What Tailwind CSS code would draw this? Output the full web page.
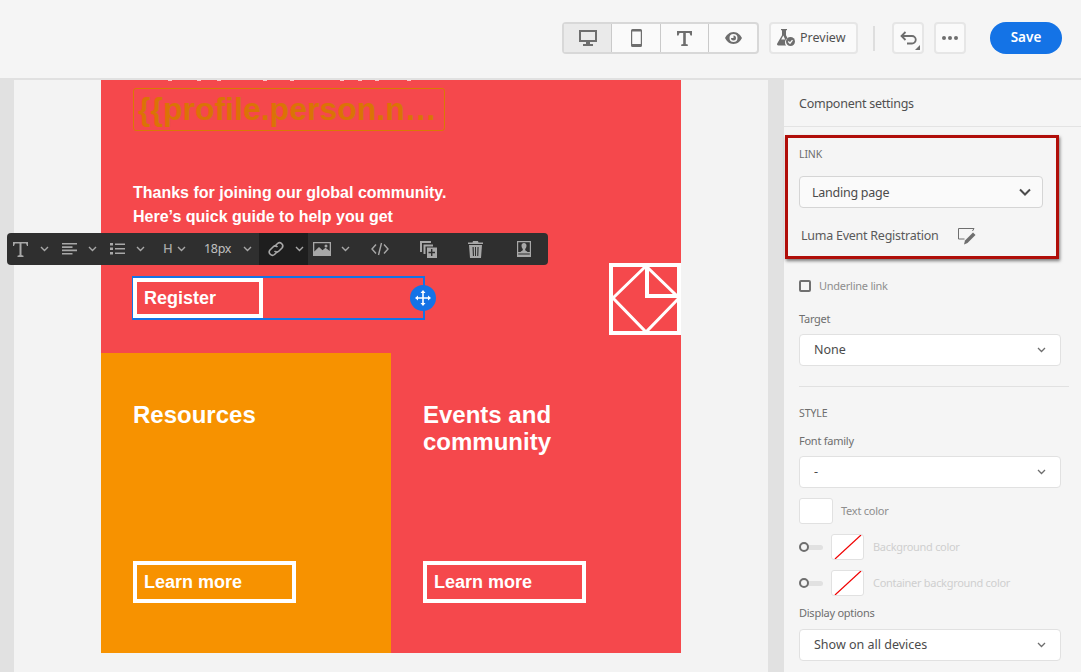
<!DOCTYPE html>
<html lang="en">
<head>
    <meta charset="UTF-8">
    <title>Email Designer</title>
    <script src="https://cdn.jsdelivr.net/npm/@tailwindcss/browser@4"></script>
</head>
<body class="w-[1081px] h-[672px] overflow-hidden relative bg-[#f5f5f5] font-['Noto_Sans',sans-serif]">

    <!-- top bar -->
    <header class="h-[80px] bg-[#f5f5f5] border-b-2 border-[#e1e1e1] flex items-center pl-[562px] pb-[2px]">
        <div class="flex h-[32px] w-[197px] rounded border-2 border-[#d8d8d8] bg-[#fafafa]">
            <div class="w-[48px] bg-[#eaeaea] border-r border-[#cacaca] flex items-center justify-center">
                <svg class="w-[18px] h-[18px]" viewBox="0 0 18 18" fill="#6e6e6e"><path d="M0 1h18v12H11v2h3v2H4v-2h3v-2H0zM2 3v8h14V3z"/></svg>
            </div>
            <div class="w-[49px] border-r border-[#cacaca] flex items-center justify-center">
                <svg class="w-[11px] h-[18px]" viewBox="0 0 11 18" fill="#6e6e6e"><path d="M1.5 0h8A1.5 1.5 0 0 1 11 1.500v15A1.500 1.500 0 0 1 9.500 18h-8A1.500 1.500 0 0 1 0 16.500v-15A1.500 1.500 0 0 1 1.500 0zM1.200 2.500v12.500h8.600V2.500z"/></svg>
            </div>
            <div class="w-[48px] border-r border-[#cacaca] flex items-center justify-center">
                <svg class="w-[15px] h-[15px]" viewBox="0 0 15 15" fill="#6e6e6e"><path d="M0 0h15v4.500h-1.500L12.500 2H8.800v11l2 .5V15H4.200v-1.500l2-.5V2H2.500l-1 2.500H0z"/></svg>
            </div>
            <div class="flex-1 flex items-center justify-center">
                <svg class="w-[17px] h-[12px]" viewBox="0 0 17 12" fill="#6e6e6e"><path fill-rule="evenodd" d="M8.500 0C12.500 0 15.500 3 17 6c-1.500 3-4.500 6-8.500 6S1.500 9 0 6C1.500 3 4.500 0 8.500 0zm0 2a4 4 0 1 0 0 8 4 4 0 0 0 0-8zM8.500 3.500a2.500 2.500 0 1 1-2.500 2.500h2.500z"/></svg>
            </div>
        </div>

        <div class="ml-[10px] w-[89px] h-[32px] rounded border-2 border-[#e6e6e6] bg-[#fafafa] flex items-center pl-[5px] gap-[4px] text-[#505050] text-[12.500px]">
            <svg class="w-[20px] h-[20px]" viewBox="0 0 20 20" fill="#6e6e6e"><path fill-rule="evenodd" d="M5 1h6v1.300h-1v5l1.500 2.700a5 5 0 0 0-1.400 7.500H2.500c-1.200 0-1.800-1-1.300-2L6 7.300v-5H5zm2.300 1.300v5.300L5.200 11.500h4l-1.900-3.900z"/><circle cx="14.500" cy="13.500" r="4.500"/><path d="M12.300 13.500l1.700 1.700 2.500-3" fill="none" stroke="#fafafa" stroke-width="1.300"/></svg>
            <span>Preview</span>
        </div>

        <div class="ml-[15px] w-[2px] h-[25px] bg-[#dedede]"></div>

        <div class="ml-[17px] w-[32px] h-[32px] rounded border-2 border-[#e6e6e6] bg-[#fafafa] flex items-center justify-center relative">
            <svg class="w-[17px] h-[14px]" viewBox="0 0 17 14" fill="none" stroke="#6e6e6e" stroke-width="1.800"><path d="M1.500 5H12a3.500 3.500 0 0 1 0 7.500H7"/><path d="M5.500 1L1.500 5l4 4"/></svg>
            <svg class="absolute right-[2px] bottom-[2px] w-[5px] h-[5px]" viewBox="0 0 5 5" fill="#6e6e6e"><path d="M5 0v5H0z"/></svg>
        </div>

        <div class="ml-[10px] w-[32px] h-[32px] rounded border-2 border-[#e6e6e6] bg-[#fafafa] flex items-center justify-center gap-[2.500px]">
            <span class="w-[3.500px] h-[3.500px] rounded-full bg-[#6e6e6e]"></span>
            <span class="w-[3.500px] h-[3.500px] rounded-full bg-[#6e6e6e]"></span>
            <span class="w-[3.500px] h-[3.500px] rounded-full bg-[#6e6e6e]"></span>
        </div>

        <div class="ml-[24px] w-[72px] h-[32px] rounded-full bg-[#1473e6] text-white text-[13.500px] font-semibold flex items-center justify-center pb-[1px]">Save</div>
    </header>

    <div class="flex h-[592px]">
        <!-- canvas -->
        <main class="w-[768px] bg-[#f3f3f3] border-l-[14px] border-[#e1e1e1] pl-[87px] overflow-hidden font-['Liberation_Sans',sans-serif] font-bold text-white">
            <div class="w-[580px]">
                <section class="h-[273px] bg-[#f5484c] px-[32px] overflow-hidden">
                    <!-- bottoms of the line scrolled out of view -->
                    <div class="flex h-px">
                        <i class="ml-[35px] w-[4px] bg-white/70"></i><i class="ml-[25px] w-[4px] bg-white/70"></i><i class="ml-[16px] w-[4px] bg-white/70"></i><i class="ml-[42px] w-[4px] bg-white/70"></i><i class="ml-[23px] w-[4px] bg-white/70"></i><i class="ml-[46px] w-[4px] bg-white/70"></i><i class="ml-[14px] w-[4px] bg-white/70"></i><i class="ml-[13px] w-[4px] bg-white/70"></i><i class="ml-[28px] w-[4px] bg-white/70"></i>
                    </div>
                    <div class="mt-[7px] w-[312px] h-[43px] border border-[#d97a05] rounded-[3px] text-[#da7306] text-[32px] leading-[40px] pl-[4px] whitespace-nowrap">{{profile.person.n…</div>
                    <p class="mt-[50px] text-[16px] leading-[24px] whitespace-nowrap">Thanks for joining our global community.<br>Here’s quick guide to help you get</p>
                    <div class="mt-[47px] flex items-center">
                        <div class="w-[293px] h-[44px] border-2 border-[#1473e6] -ml-[1px]">
                            <div class="-ml-[1px] w-[130px] h-[40px] border-[4px] border-white text-[18px] leading-[32px] pl-[7px]">Register</div>
                        </div>
                    </div>
                </section>
                <section class="grid grid-cols-2 h-[300px]">
                    <div class="bg-[#f79200] pt-[48px] pl-[32px] flex flex-col">
                        <h2 class="text-[24px] leading-[27px]">Resources</h2>
                        <div class="mt-auto mb-[50px] w-[163px] h-[42px] border-[4px] border-white text-[18px] leading-[34px] pl-[7px]">Learn more</div>
                    </div>
                    <div class="bg-[#f5484c] pt-[48px] pl-[32px] flex flex-col">
                        <h2 class="text-[24px] leading-[27px]">Events and<br>community</h2>
                        <div class="mt-auto mb-[50px] w-[163px] h-[42px] border-[4px] border-white text-[18px] leading-[34px] pl-[7px]">Learn more</div>
                    </div>
                </section>
            </div>
        </main>

        <!-- settings panel -->
        <aside class="w-[313px] bg-[#f5f5f5] border-l-[16px] border-[#e1e1e1] text-[#4b4b4b]">
            <div class="h-[47px] border-b border-[#e3e3e3] pl-[15px] pt-[14px] text-[12.500px] tracking-[-0.25px] leading-[20px] text-[#505050]">Component settings</div>

            <div class="pl-[15px] pr-[20px]">
                <div class="mt-[20px] text-[10.500px] tracking-[-0.1px] leading-[14px] text-[#6e6e6e]">LINK</div>
                <div class="mt-[15px] w-[244px] h-[32px] rounded border border-[#d5d5d5] bg-[#fafafa] flex items-center justify-between pl-[12px] pr-[11px] text-[12.500px] tracking-[-0.25px] text-[#4b4b4b]">
                    <span class="pt-[2px]">Landing page</span>
                    <svg class="w-[12px] h-[8px]" viewBox="0 0 12 8" fill="none" stroke="#4b4b4b" stroke-width="2"><path d="M1 1.500l5 5 5-5"/></svg>
                </div>
                <div class="mt-[18px] ml-[2px] flex items-center h-[20px] text-[12.500px] tracking-[-0.25px] text-[#5a5a5a]">
                    Luma Event Registration
                    <svg class="ml-[19px] w-[18px] h-[17px]" viewBox="0 0 18 17" fill="none"><path d="M.500 11V.500h15.500l-1.500 2.500" stroke="#6e6e6e"/><path d="M.500 11h6" stroke="#6e6e6e"/><path d="M6 16.500l1-4 8-8 2.500 2.500-8 8z" fill="#6e6e6e"/></svg>
                </div>

                <div class="mt-[33px] flex items-center h-[14px] text-[11px] tracking-[-0.25px] text-[#8e8e8e]">
                    <span class="w-[12px] h-[12px] rounded-[2px] border-2 border-[#707070]"></span>
                    <span class="ml-[8px]">Underline link</span>
                </div>
                <div class="mt-[18px] text-[11px] tracking-[-0.25px] leading-[16px] text-[#6e6e6e]">Target</div>
                <div class="mt-[7px] w-[262px] h-[32px] rounded border border-[#e1e1e1] bg-white flex items-center justify-between pl-[14px] pr-[14px] text-[12.500px] text-[#4b4b4b]">
                    None
                    <svg class="w-[9px] h-[6px]" viewBox="0 0 9 6" fill="none" stroke="#6e6e6e" stroke-width="1.300"><path d="M1 1l3.500 3.500L8 1"/></svg>
                </div>
                <div class="mt-[20px] w-[270px] h-px bg-[#e1e1e1]"></div>

                <div class="mt-[19px] text-[10.500px] tracking-[-0.1px] leading-[14px] text-[#6e6e6e]">STYLE</div>
                <div class="mt-[13px] text-[11px] tracking-[-0.25px] leading-[16px] text-[#6e6e6e]">Font family</div>
                <div class="mt-[7px] w-[262px] h-[32px] rounded border border-[#e1e1e1] bg-white flex items-center justify-between pl-[14px] pr-[14px] text-[12.500px] text-[#4b4b4b]">
                    -
                    <svg class="w-[9px] h-[6px]" viewBox="0 0 9 6" fill="none" stroke="#6e6e6e" stroke-width="1.300"><path d="M1 1l3.500 3.500L8 1"/></svg>
                </div>

                <div class="mt-[10px] flex items-center gap-[8px] text-[11px] tracking-[-0.25px] text-[#8e8e8e]">
                    <span class="w-[34px] h-[26px] rounded-[3px] border border-[#e1e1e1] bg-white"></span>
                    Text color
                </div>
                <div class="mt-[10px] flex items-center text-[11px] tracking-[-0.3px] text-[#cfcfcf]">
                    <span class="w-[10px] h-[10px] rounded-full border-2 border-[#6e6e6e] bg-[#f5f5f5] relative z-10"></span>
                    <span class="w-[15px] h-[5px] -ml-[1px] rounded-r-full bg-[#e1e1e1]"></span>
                    <span class="ml-[8px] w-[33px] h-[26px] rounded-[3px] border border-[#e1e1e1] bg-white">
                        <svg class="w-[31px] h-[24px]" viewBox="0 0 31 24"><path d="M3 24L29 0" stroke="#f00000" stroke-width="1.200"/></svg>
                    </span>
                    <span class="ml-[9px]">Background color</span>
                </div>
                <div class="mt-[10px] flex items-center text-[11px] tracking-[-0.3px] text-[#cfcfcf]">
                    <span class="w-[10px] h-[10px] rounded-full border-2 border-[#6e6e6e] bg-[#f5f5f5] relative z-10"></span>
                    <span class="w-[15px] h-[5px] -ml-[1px] rounded-r-full bg-[#e1e1e1]"></span>
                    <span class="ml-[8px] w-[33px] h-[26px] rounded-[3px] border border-[#e1e1e1] bg-white">
                        <svg class="w-[31px] h-[24px]" viewBox="0 0 31 24"><path d="M3 24L29 0" stroke="#f00000" stroke-width="1.200"/></svg>
                    </span>
                    <span class="ml-[9px]">Container background color</span>
                </div>

                <div class="mt-[9px] text-[11px] tracking-[-0.25px] leading-[16px] text-[#6e6e6e]">Display options</div>
                <div class="mt-[8px] w-[262px] h-[32px] rounded border border-[#e1e1e1] bg-white flex items-center justify-between pl-[14px] pr-[14px] text-[12.500px] text-[#4b4b4b]">
                    Show on all devices
                    <svg class="w-[9px] h-[6px]" viewBox="0 0 9 6" fill="none" stroke="#6e6e6e" stroke-width="1.300"><path d="M1 1l3.500 3.500L8 1"/></svg>
                </div>
            </div>
        </aside>
    </div>

    <!-- logo on the email -->
    <svg class="absolute left-[609px] top-[263px] w-[72px] h-[72px]" viewBox="0 0 72 72" fill="none" stroke="#fff"><path d="M2 2h70M2 70h70M2 0v72M70 0v72M38 4v29h32" stroke-width="4"/><path d="M37 3L4 35l33 34 33-34z" stroke-width="3"/></svg>

    <!-- floating text toolbar -->
    <div class="absolute left-[7px] top-[233px] w-[541px] h-[32px] rounded-[4px] bg-[#2f2f2f] flex items-center text-[#b4b4b4] font-['Noto_Sans',sans-serif] overflow-hidden">
        <svg class="ml-[6px] w-[15px] h-[15px]" viewBox="0 0 15 15" fill="#a8a8a8"><path d="M0 0h15v4h-1l-1-2.500H8.500V13l2 .800V15h-6v-1.200l2-.8V1.500H2L1 4H0z"/></svg>
        <svg class="ml-[12px] w-[9px] h-[6px]" viewBox="0 0 9 6" fill="none" stroke="#a8a8a8" stroke-width="1.400"><path d="M1 1l3.500 3.500L8 1"/></svg>
        <svg class="ml-[13px] w-[15px] h-[12px]" viewBox="0 0 15 12" fill="#a8a8a8"><path d="M0 0h15v1.600H0zM0 3.300h10.500v1.600H0zM0 6.600h15v1.600H0zM0 9.900h10.500v1.600H0z"/></svg>
        <svg class="ml-[11px] w-[9px] h-[6px]" viewBox="0 0 9 6" fill="none" stroke="#a8a8a8" stroke-width="1.400"><path d="M1 1l3.500 3.500L8 1"/></svg>
        <svg class="ml-[13px] w-[15px] h-[12px]" viewBox="0 0 15 12" fill="#a8a8a8"><path d="M0 0h3v2.500H0zM5 .500h10v1.600H5zM0 4.500h3V7H0zM5 5h10v1.600H5zM0 9h3v2.500H0zM5 9.500h10v1.600H5z"/></svg>
        <svg class="ml-[11px] w-[9px] h-[6px]" viewBox="0 0 9 6" fill="none" stroke="#a8a8a8" stroke-width="1.400"><path d="M1 1l3.500 3.500L8 1"/></svg>
        <span class="ml-[18px] w-[9px] text-[13px] font-medium text-[#a8a8a8]">H</span>
        <svg class="ml-[5px] w-[9px] h-[6px]" viewBox="0 0 9 6" fill="none" stroke="#a8a8a8" stroke-width="1.400"><path d="M1 1l3.500 3.500L8 1"/></svg>
        <span class="ml-[18px] w-[26px] text-[12.500px] tracking-[-0.3px] whitespace-nowrap text-[#c0c0c0]">18px</span>
        <svg class="ml-[13px] w-[9px] h-[6px]" viewBox="0 0 9 6" fill="none" stroke="#a8a8a8" stroke-width="1.400"><path d="M1 1l3.500 3.500L8 1"/></svg>
        <div class="ml-[7px] w-[49px] h-full bg-[#1e1e1e] flex items-center pl-[8px]">
            <svg class="w-[18px] h-[18px]" viewBox="0 0 18 18" fill="none" stroke="#a8a8a8" stroke-width="1.600"><path d="M7.500 6.500l3-3a3.200 3.200 0 0 1 4.500 4.500l-3 3a3.200 3.200 0 0 1-4.500 0"/><path d="M10.500 11.500l-3 3A3.200 3.200 0 0 1 3 10l3-3a3.200 3.200 0 0 1 4.500 0"/></svg>
            <svg class="ml-[10px] w-[9px] h-[6px]" viewBox="0 0 9 6" fill="none" stroke="#a8a8a8" stroke-width="1.400"><path d="M1 1l3.500 3.500L8 1"/></svg>
        </div>
        <svg class="ml-[5px] w-[18px] h-[14px]" viewBox="0 0 18 14" fill="#a8a8a8"><path fill-rule="evenodd" d="M0 0h18v14H0zM1.300 1.300v8.200l4.700-4.500 3.500 3.200 3-2.500 4.200 3.300V1.300z"/><circle cx="13" cy="4" r="1.500"/></svg>
        <svg class="ml-[10px] w-[9px] h-[6px]" viewBox="0 0 9 6" fill="none" stroke="#a8a8a8" stroke-width="1.400"><path d="M1 1l3.500 3.500L8 1"/></svg>
        <svg class="ml-[21px] w-[18px] h-[14px]" viewBox="0 0 18 14" fill="none" stroke="#a8a8a8" stroke-width="1.400"><path d="M5 2.500L1 7l4 4.500M13 2.500L17 7l-4 4.500M10.500 1L7.500 13"/></svg>
        <svg class="ml-[31px] w-[17px] h-[17px]" viewBox="0 0 17 17" fill="#a8a8a8"><path d="M0 0h11v2H2v9H0z" /><path fill-rule="evenodd" d="M3.500 3.500H13v2H5.500V13h-2z"/><path fill-rule="evenodd" d="M7 6.500h10V17H7zM11 8v2.800H8.500v1.400H11V15h1.400v-2.800H15v-1.400h-2.600V8z"/></svg>
        <svg class="ml-[31px] w-[15px] h-[17px]" viewBox="0 0 15 17" fill="#a8a8a8"><path d="M5 0h5l.5 1.500H15V3H0V1.500h4.500zM1 4h13l-1 13H2zM4.500 6l.4 9h1.100l-.3-9zM7 6v9h1V6zM9.500 6l-.3 9h1.100l.3-9z"/></svg>
        <svg class="ml-[34px] w-[14px] h-[16px]" viewBox="0 0 14 16" fill="#a8a8a8"><path fill-rule="evenodd" d="M0 0h14v16H0zM1.200 1.200v9.800h2.300c.8-1 2-1.300 2.300-2v-1C5 7 4.500 6 4.500 4.500 4.500 3 5.500 2 7 2s2.500 1 2.500 2.500C9.500 6 9 7 8.200 8v1c.3.700 1.500 1 2.300 2h2.300V1.200zM1.200 12.500v1h11.600v-1z"/></svg>
    </div>

    <!-- move handle -->
    <div class="absolute left-[410px] top-[285px] w-[26px] h-[26px] rounded-full bg-[#1473e6] flex items-center justify-center">
        <svg class="w-[16px] h-[16px]" viewBox="0 0 16 16" fill="#fff"><path d="M7.200 3h1.600v4.200H13V5.500L16 8l-3 2.500V8.800H8.800V13h1.700L8 16l-2.500-3h1.700V8.800H3v1.700L0 8l3-2.500v1.700h4.200V3H5.500L8 0l2.500 3z"/></svg>
    </div>

    <!-- annotation box -->
    <div class="absolute left-[785px] top-[135px] w-[274px] h-[124px] border-[3px] border-[#b00e09] shadow-[1px_2px_3px_rgba(0,0,0,0.5)]"></div>
</body>
</html>
